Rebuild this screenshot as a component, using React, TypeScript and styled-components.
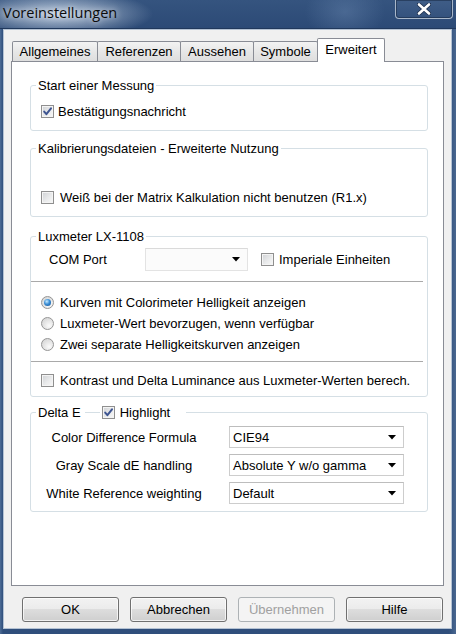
import React, { useState } from 'react';
import styled, { createGlobalStyle } from 'styled-components';

const GlobalStyle = createGlobalStyle`
  html, body {
    margin: 0;
    padding: 0;
    background: #2f4e7b;
  }
  body {
    font-family: "Liberation Sans", Arial, sans-serif;
    font-size: 13px;
    color: #000;
  }
`;

const Window = styled.div`
  width: 456px;
  height: 634px;
  box-sizing: border-box;
  display: flex;
  flex-direction: column;
  background: linear-gradient(90deg, #4d6c96 0%, #2f4e7b 3px, #2f4e7b 449px, #4a6790 456px);
  overflow: hidden;
`;

const TitleBar = styled.div`
  height: 29px;
  flex: none;
  display: flex;
  justify-content: space-between;
  align-items: flex-start;
  background:
    radial-gradient(ellipse 95px 24px at 58px 14px, rgba(214, 226, 240, 0.85), rgba(214, 226, 240, 0) 100%),
    radial-gradient(ellipse 40px 30px at 345px 12px, rgba(120, 150, 190, 0.35), rgba(120, 150, 190, 0) 100%),
    linear-gradient(#35547f, #2c4a76);
  border-bottom: 1px solid #20385c;
  box-sizing: border-box;
`;

const Title = styled.div`
  font-family: "Open Sans", "Liberation Sans", sans-serif;
  font-size: 14.5px;
  line-height: 18px;
  margin: 4px 0 0 3px;
  color: #0c0c0c;
  text-shadow: 0 0 6px rgba(255, 255, 255, 0.9);
`;

const CloseButton = styled.div`
  width: 58px;
  height: 19px;
  margin-right: 3px;
  box-sizing: border-box;
  border: 1px solid #a9b7c9;
  border-top: none;
  border-radius: 0 0 4px 4px;
  background: linear-gradient(#3f5d87, #34527d);
  box-shadow: inset 0 0 0 1px rgba(20, 35, 60, 0.5);
  display: flex;
  align-items: center;
  justify-content: center;
`;

const Client = styled.div`
  flex: none;
  height: 600px;
  margin: 0 4px 0 3px;
  box-sizing: border-box;
  border: 1px solid #b4c2d3;
  background: #f0f0f0;
  padding-top: 8px;
  display: flex;
  flex-direction: column;
`;

const TabStrip = styled.div`
  display: flex;
  align-items: flex-end;
  margin-left: 8px;
`;

const Tab = styled.div<{ $w: number; $active?: boolean; $first?: boolean }>`
  position: relative;
  z-index: ${p => (p.$active ? 1 : 0)};
  width: ${p => p.$w}px;
  height: ${p => (p.$active ? 24 : 20)}px;
  margin-left: ${p => (p.$first ? 0 : -1)}px;
  margin-bottom: ${p => (p.$active ? -1 : 0)}px;
  padding-bottom: ${p => (p.$active ? 3 : 0)}px;
  box-sizing: border-box;
  border: 1px solid #898c95;
  border-bottom: none;
  border-radius: 2px 2px 0 0;
  background: ${p => (p.$active ? '#fff' : 'linear-gradient(#f3f3f3, #e6e6e6 55%, #dedede)')};
  display: flex;
  align-items: center;
  justify-content: center;
  font-size: 13px;
  white-space: nowrap;
`;

const Panel = styled.div`
  width: 433px;
  height: 525px;
  margin-left: 7px;
  box-sizing: border-box;
  border: 1px solid #898c95;
  background: #fff;
  padding: 16px 15px 0 18px;
`;

const Group = styled.fieldset<{ $mt?: number; $pt: number; $pb: number }>`
  margin: ${p => p.$mt ?? 0}px 0 0;
  padding: ${p => p.$pt}px 10px ${p => p.$pb}px;
  border: 1px solid #d5dfe5;
  border-radius: 3px;
  min-width: 0;
`;

const Legend = styled.legend`
  padding: 0 2px;
  margin-left: -5px;
  line-height: 15px;
  font-size: 13px;
  display: flex;
  align-items: center;
`;

const Dash = styled.span`
  width: 15px;
  height: 1px;
  background: #d5dfe5;
  margin: 0 2px 0 4px;
`;

const Row = styled.label<{ $h?: number; $indent?: number }>`
  display: flex;
  align-items: center;
  height: ${p => p.$h ?? 20}px;
  margin-left: ${p => p.$indent ?? 0}px;
  white-space: nowrap;
`;

const BoxWrap = styled.span<{ $gap?: number }>`
  display: inline-flex;
  align-items: center;
  margin-right: ${p => p.$gap ?? 4}px;
`;

const Box = styled.span`
  width: 13px;
  height: 13px;
  box-sizing: border-box;
  border: 1px solid #8f8f8f;
  background: linear-gradient(135deg, #cfd1d4 0%, #e9eaeb 55%, #f8f8f8 100%);
  box-shadow: inset 0 0 0 1px #f4f4f4;
  display: flex;
  align-items: center;
  justify-content: center;
`;

const RadioCircle = styled.span`
  width: 13px;
  height: 13px;
  box-sizing: border-box;
  border-radius: 50%;
  border: 1px solid #959595;
  background: radial-gradient(circle at 65% 70%, #fbfbfb 0%, #e2e2e2 55%, #cfcfcf 100%);
  display: flex;
  align-items: center;
  justify-content: center;
`;

const RadioDot = styled.span`
  width: 7px;
  height: 7px;
  border-radius: 50%;
  background: radial-gradient(circle at 40% 35%, #c9ecff 0%, #3c8fd6 45%, #0d4b8e 100%);
`;

const Separator = styled.div<{ $mt: number }>`
  height: 1px;
  background: #a9a9a9;
  margin: ${p => p.$mt}px -6px 0 -10px;
`;

const Field = styled.span<{ $w: number }>`
  width: ${p => p.$w}px;
  flex: none;
`;

const ComboBox = styled.div<{ $w: number; $h: number; $flat?: boolean }>`
  width: ${p => p.$w}px;
  height: ${p => p.$h}px;
  box-sizing: border-box;
  border: 1px solid ${p => (p.$flat ? '#e3e3e3' : '#cdcdcd')};
  border-top-color: ${p => (p.$flat ? '#dadada' : '#bdbdbd')};
  background: ${p => (p.$flat ? '#fbfbfb' : '#fff')};
  display: flex;
  align-items: center;
  justify-content: space-between;
  padding: 0 7px 0 3px;
  flex: none;
`;

const DeltaRow = styled.div`
  display: flex;
  align-items: center;
  height: 22px;
  & + & {
    margin-top: 6px;
  }
`;

const DeltaLabel = styled.span`
  width: 166px;
  text-align: center;
  margin-right: 22px;
  white-space: nowrap;
`;

const ButtonBar = styled.div`
  display: flex;
  gap: 11px;
  margin-top: 11px;
  padding-left: 18px;
`;

const Button = styled.button<{ $disabled?: boolean }>`
  width: 97px;
  height: 25px;
  box-sizing: border-box;
  font-family: "Liberation Sans", Arial, sans-serif;
  font-size: 13px;
  border-radius: 3px;
  padding: 0;
  border: 1px solid ${p => (p.$disabled ? '#adb2b5' : '#707070')};
  color: ${p => (p.$disabled ? '#a0a0a0' : '#000')};
  background: ${p =>
    p.$disabled
      ? '#f4f4f4'
      : 'linear-gradient(#f2f2f2 0%, #ebebeb 50%, #dddddd 50%, #cfcfcf 100%)'};
  box-shadow: inset 0 0 0 1px ${p => (p.$disabled ? '#f4f4f4' : 'rgba(255,255,255,0.7)')};
`;

const Arrow = () => (
  <svg width="8" height="5" viewBox="0 0 8 5">
    <path d="M0 0 H8 L4 4.5 Z" fill="#000" />
  </svg>
);

const Check = () => (
  <svg width="11" height="11" viewBox="0 0 11 11">
    <path d="M2.2 5.6 L4.4 8.2 L9 2.4" fill="none" stroke="#3e5591" strokeWidth="2" strokeLinecap="round" strokeLinejoin="round" />
  </svg>
);

const CheckBox = ({ checked, gap }: { checked?: boolean; gap?: number }) => (
  <BoxWrap $gap={gap}>
    <Box>{checked && <Check />}</Box>
  </BoxWrap>
);

const Radio = ({ checked }: { checked?: boolean }) => (
  <BoxWrap $gap={6}>
    <RadioCircle>{checked && <RadioDot />}</RadioCircle>
  </BoxWrap>
);

const Combo = (props: { w: number; h: number; value?: string; flat?: boolean }) => (
  <ComboBox $w={props.w} $h={props.h} $flat={props.flat}>
    <span>{props.value}</span>
    <Arrow />
  </ComboBox>
);

const tabs = [
  { name: 'Allgemeines', w: 86 },
  { name: 'Referenzen', w: 84 },
  { name: 'Aussehen', w: 74 },
  { name: 'Symbole', w: 65 },
  { name: 'Erweitert', w: 68 },
];

const luxModes = [
  'Kurven mit Colorimeter Helligkeit anzeigen',
  'Luxmeter-Wert bevorzugen, wenn verfügbar',
  'Zwei separate Helligkeitskurven anzeigen',
];

const deltaRows = [
  { label: 'Color Difference Formula', value: 'CIE94' },
  { label: 'Gray Scale dE handling', value: 'Absolute Y w/o gamma' },
  { label: 'White Reference weighting', value: 'Default' },
];

const App = () => {
  const [activeTab] = useState('Erweitert');
  const [luxMode] = useState(0);

  return (
    <>
      <GlobalStyle />
      <Window>
        <TitleBar>
          <Title>Voreinstellungen</Title>
          <CloseButton>
            <svg width="14" height="12" viewBox="0 0 14 12">
              <path d="M2 1.5 L12 10.5 M12 1.5 L2 10.5" stroke="#1d2f4d" strokeWidth="4.2" strokeLinecap="round" />
              <path d="M2 1.5 L12 10.5 M12 1.5 L2 10.5" stroke="#fff" strokeWidth="2.6" strokeLinecap="round" />
            </svg>
          </CloseButton>
        </TitleBar>

        <Client>
          <TabStrip>
            {tabs.map((t, i) => (
              <Tab key={t.name} $w={t.w} $first={i === 0} $active={t.name === activeTab}>
                {t.name}
              </Tab>
            ))}
          </TabStrip>

          <Panel>
            <Group $pt={8} $pb={9}>
              <Legend>Start einer Messung</Legend>
              <Row>
                <CheckBox checked />
                Bestätigungsnachricht
              </Row>
            </Group>

            <Group $mt={10} $pt={31} $pb={9}>
              <Legend>Kalibrierungsdateien - Erweiterte Nutzung</Legend>
              <Row>
                <CheckBox gap={6} />
                Weiß bei der Matrix Kalkulation nicht benutzen (R1.x)
              </Row>
            </Group>

            <Group $mt={12} $pt={4} $pb={6}>
              <Legend>Luxmeter LX-1108</Legend>
              <Row as="div" $h={23} $indent={8}>
                <Field $w={96}>COM Port</Field>
                <Combo w={103} h={23} flat />
                <Field $w={13} />
                <CheckBox gap={5} />
                Imperiale Einheiten
              </Row>
              <Separator $mt={10} />
              <div style={{ marginTop: 10 }}>
                {luxModes.map((m, i) => (
                  <Row key={m} $h={21}>
                    <Radio checked={i === luxMode} />
                    {m}
                  </Row>
                ))}
              </div>
              <Separator $mt={6} />
              <Row style={{ marginTop: 8 }}>
                <CheckBox gap={6} />
                Kontrast und Delta Luminance aus Luxmeter-Werten berech.
              </Row>
            </Group>

            <Group $mt={8} $pt={6} $pb={7}>
              <Legend>
                Delta E
                <Dash />
                <CheckBox checked gap={5} />
                <span style={{ paddingRight: 14 }}>Highlight</span>
              </Legend>
              {deltaRows.map(r => (
                <DeltaRow key={r.label}>
                  <DeltaLabel>{r.label}</DeltaLabel>
                  <Combo w={175} h={22} value={r.value} />
                </DeltaRow>
              ))}
            </Group>
          </Panel>

          <ButtonBar>
            <Button>OK</Button>
            <Button>Abbrechen</Button>
            <Button $disabled>Übernehmen</Button>
            <Button>Hilfe</Button>
          </ButtonBar>
        </Client>
      </Window>
    </>
  );
};

export default App;
